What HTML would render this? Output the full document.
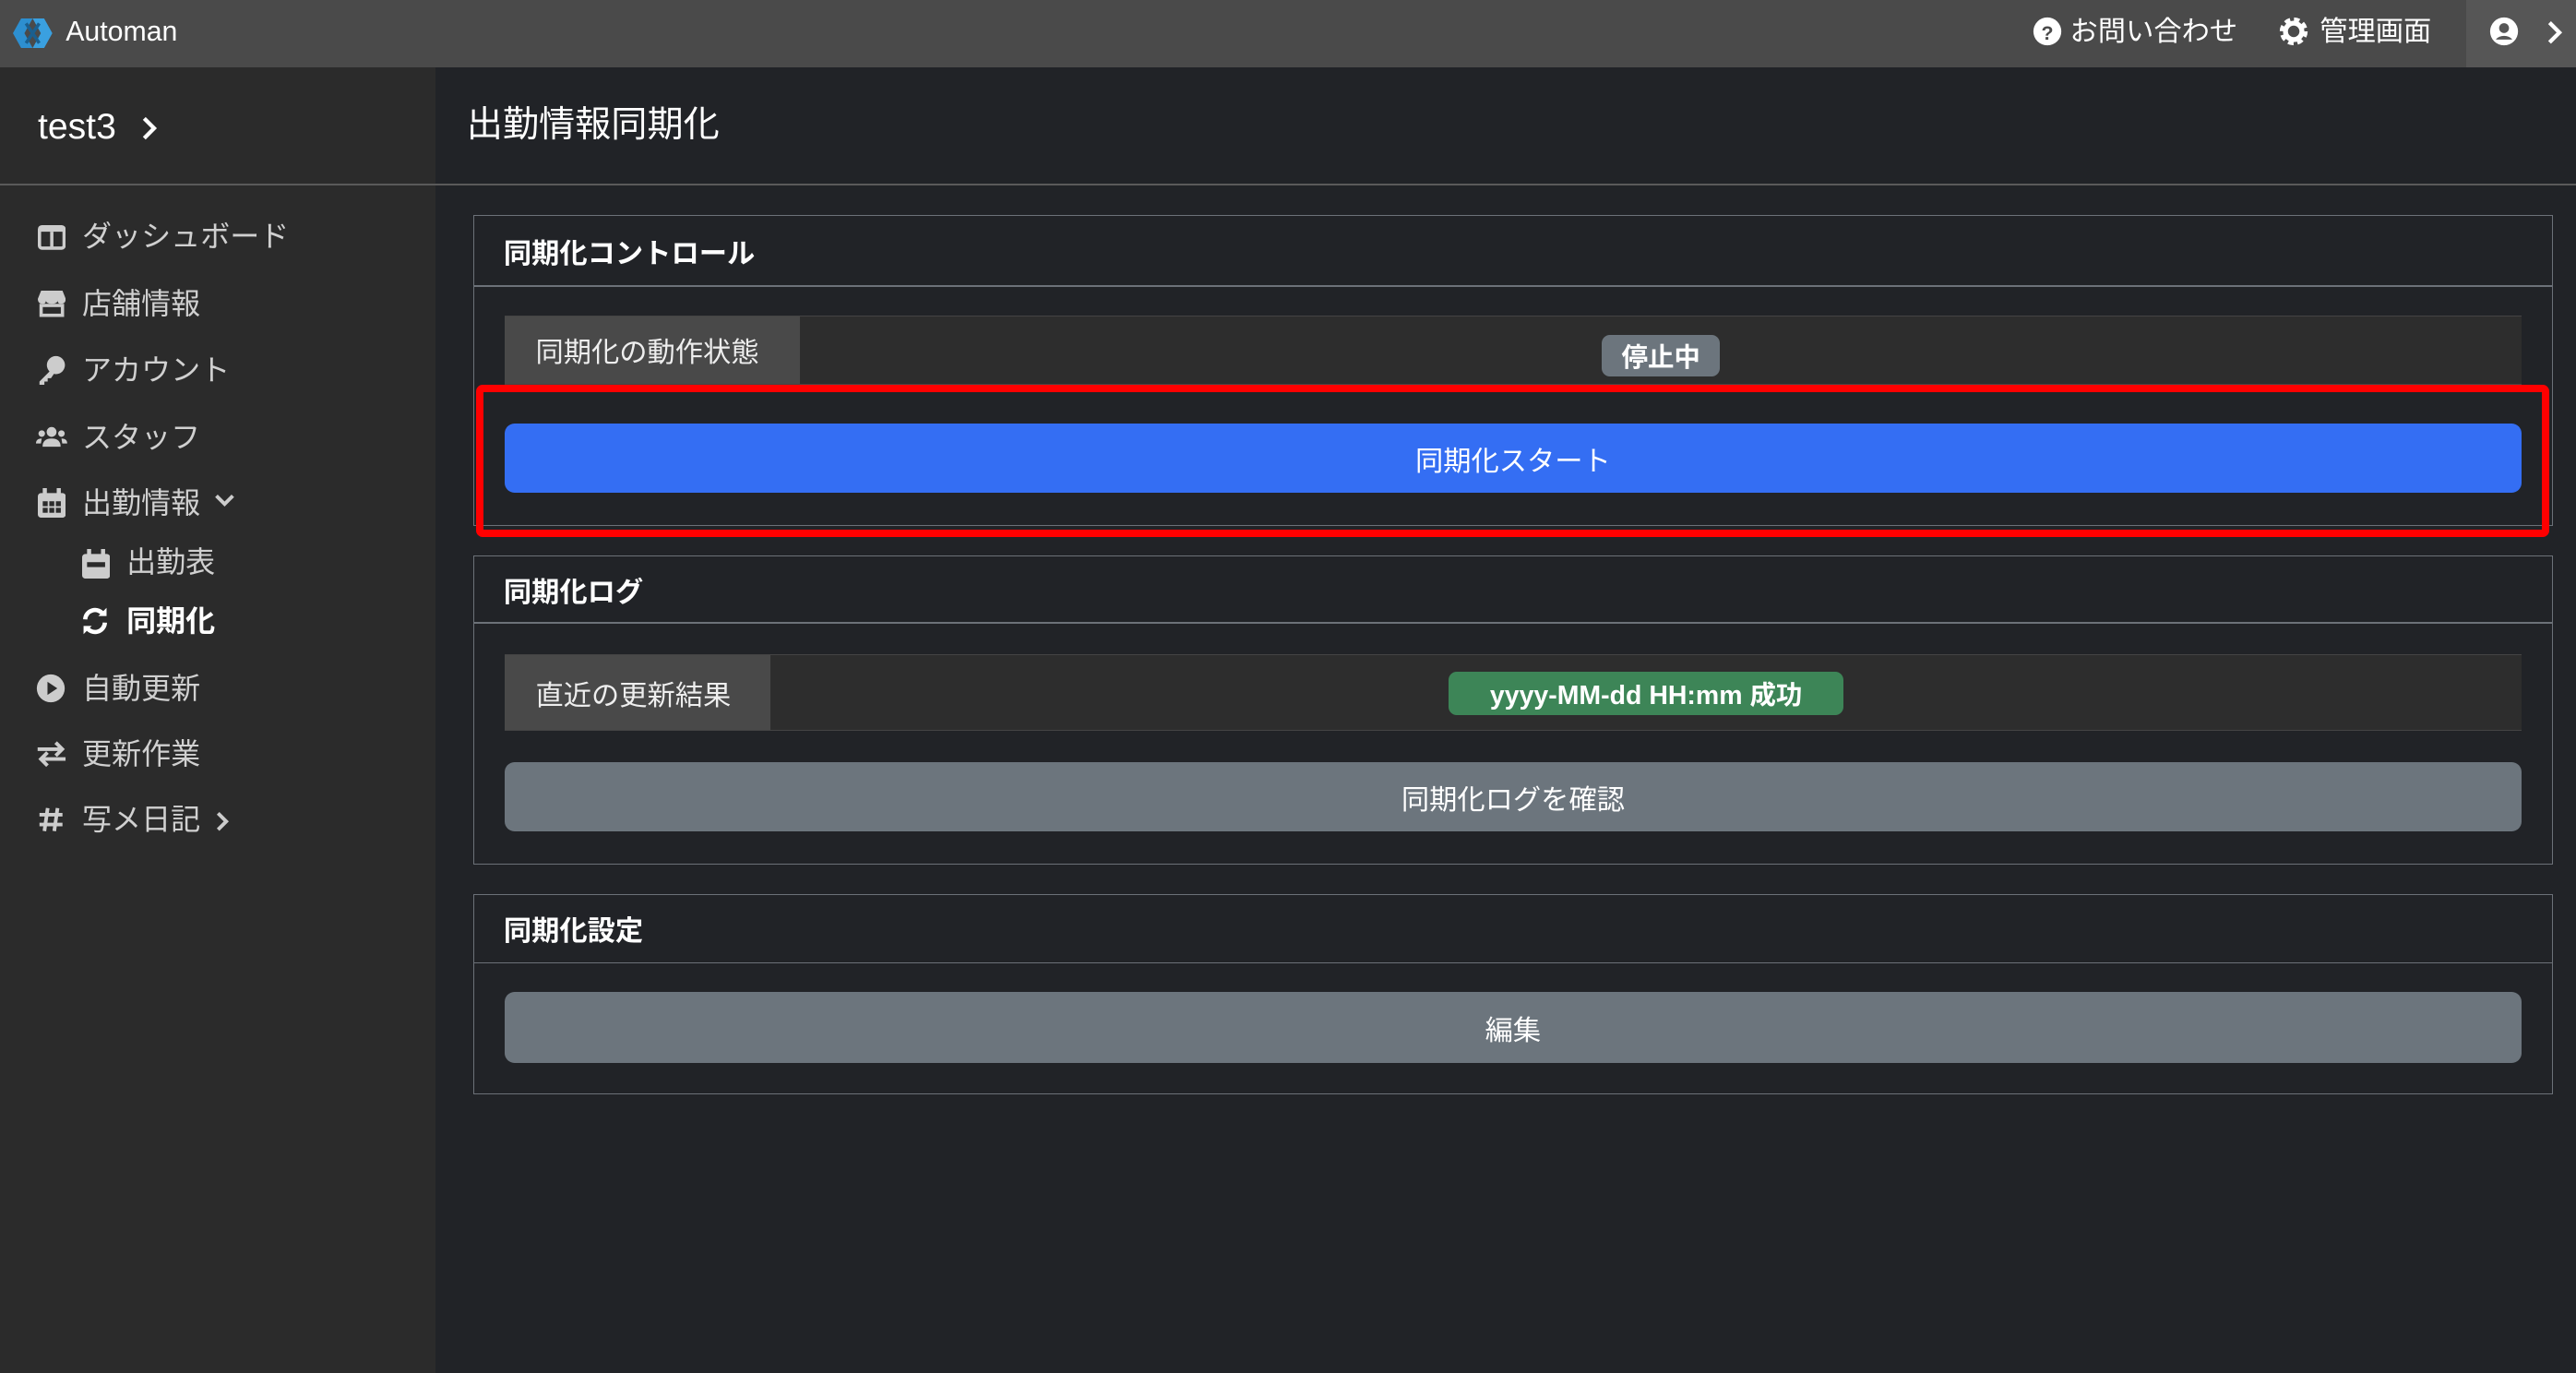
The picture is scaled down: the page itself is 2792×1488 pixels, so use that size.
<!DOCTYPE html>
<html><head><meta charset="utf-8"><style>
*{box-sizing:border-box;margin:0;padding:0}
html,body{width:2792px;height:1488px;overflow:hidden;background:#212327}
#r{zoom:1.7806;position:relative;width:1568px;height:836px;font-family:"Liberation Sans","Noto Sans CJK JP",sans-serif;color:#eee}
.a{position:absolute}
.hdr{left:0;top:0;width:1568px;height:41px;background:#4a4a4a}
.side{left:0;top:41px;width:265px;height:795px;background:#2b2b2b}
.t{white-space:nowrap;line-height:1}
.nav{font-size:18px;color:#d0d0d0}
.card{border:1px solid #6c7178;left:288px;width:1266px}
.ch{position:absolute;left:18px;font-size:17px;font-weight:bold;color:#fff}
.hl{position:absolute;left:0;right:0;height:1px;background:#6c7178}
.row{left:307px;width:1228px;background:#2d2d2d;border-top:1px solid #444;border-bottom:1px solid #444}
.lab{position:absolute;left:0;top:0;bottom:0;background:#494949;color:#eee;font-size:17px;display:flex;align-items:center;padding-left:19px}
.btn{left:307px;width:1228px;height:42px;border-radius:6px;display:flex;align-items:center;justify-content:center;font-size:17px;color:#fff}
.badge{border-radius:5px;font-size:16px;font-weight:bold;color:#fff;display:flex;align-items:center;justify-content:center}
svg{position:absolute}
</style></head><body><div id="r">
<div class="a hdr"></div>
<svg style="left:8px;top:11px" width="24" height="18" viewBox="0 0 24 18"><path d="M0 9L5 0h7l-5 9 5 9H5z" fill="#2d8fd0"/><path d="M24 9l-5-9h-7l5 9-5 9h7z" fill="#3aa0e0"/><path d="M8 3l8 12M16 3L8 15" stroke="#1a5f8f" stroke-width="2"/></svg>
<div class="a t" style="left:40px;top:11px;font-size:17px;color:#fff">Automan</div>
<svg style="left:1237px;top:10px" width="18" height="18" viewBox="0 0 18 18"><circle cx="9" cy="9" r="8.5" fill="#fff"/><text x="9" y="14" font-size="12" font-weight="bold" text-anchor="middle" fill="#4a4a4a" font-family="Liberation Sans">?</text></svg>
<div class="a t" style="left:1260px;top:11px;font-size:17px;color:#fff">お問い合わせ</div>
<svg style="left:1387px;top:10px" width="18" height="18" viewBox="0 0 18 18"><circle cx="9" cy="9" r="6.5" fill="none" stroke="#fff" stroke-width="4" stroke-dasharray="3 2.1"/><circle cx="9" cy="9" r="5" fill="none" stroke="#fff" stroke-width="3"/></svg>
<div class="a t" style="left:1412px;top:11px;font-size:17px;color:#fff">管理画面</div>
<div class="a" style="left:1501px;top:0;width:67px;height:41px;background:#565656"></div>
<svg style="left:1515px;top:10px" width="18" height="18" viewBox="0 0 18 18"><circle cx="9" cy="9" r="8.5" fill="#fff"/><circle cx="9" cy="7" r="3" fill="#565656"/><path d="M4 14c2-3 8-3 10 0" fill="#565656"/></svg>
<svg style="left:1549px;top:12px" width="12" height="16" viewBox="0 0 12 16"><path d="M3 2l6 6-6 6" stroke="#fff" stroke-width="2.4" fill="none"/></svg>

<div class="a side"></div>
<div class="a t" style="left:23px;top:66px;font-size:22px;color:#fff">test3</div>
<svg style="left:85px;top:69px" width="12" height="18" viewBox="0 0 12 18"><path d="M3 3l6 6-6 6" stroke="#fff" stroke-width="2.4" fill="none"/></svg>
<div class="a t" style="left:284px;top:65px;font-size:22px;color:#fff">出勤情報同期化</div>
<div class="a" style="left:0;top:112px;width:1568px;height:1px;background:#5a5a5a"></div>

<svg style="left:23px;top:137px" width="17" height="15" viewBox="0 0 17 15"><rect x="1" y="1" width="15" height="13" rx="1.5" fill="none" stroke="#ccc" stroke-width="2"/><rect x="1" y="1" width="15" height="3" fill="#ccc"/><path d="M8.5 4v10" stroke="#ccc" stroke-width="2"/></svg>
<div class="a t nav" style="left:50px;top:135px">ダッシュボード</div>
<svg style="left:23px;top:177px" width="17" height="16" viewBox="0 0 17 16"><path d="M2 0h13l2 5q0 3-3 3-2 0-2-2 0 2-3.5 2T5 6q0 2-2 2-3 0-3-3z" fill="#ccc"/><rect x="2" y="9" width="13" height="6" fill="none" stroke="#ccc" stroke-width="2"/></svg>
<div class="a t nav" style="left:50px;top:176px">店舗情報</div>
<svg style="left:23px;top:216px" width="17" height="18" viewBox="0 0 17 18"><circle cx="11" cy="6" r="5.5" fill="#ccc"/><path d="M8 9L1 16v2h3v-2h2v-2h2l2-3z" fill="#ccc"/></svg>
<div class="a t nav" style="left:50px;top:216px">アカウント</div>
<svg style="left:22px;top:259px" width="19" height="14" viewBox="0 0 19 14"><circle cx="9.5" cy="4" r="3" fill="#ccc"/><circle cx="3.5" cy="5" r="2" fill="#ccc"/><circle cx="15.5" cy="5" r="2" fill="#ccc"/><path d="M4 13q0-5 5.5-5T15 13zM0 11q0-3 3.5-3L3 11zM19 11q0-3-3.5-3l.5 3z" fill="#ccc"/></svg>
<div class="a t nav" style="left:50px;top:257px">スタッフ</div>
<svg style="left:23px;top:297px" width="17" height="18" viewBox="0 0 17 18"><rect x="0" y="3" width="17" height="15" rx="2" fill="#ccc"/><rect x="3" y="0" width="2.5" height="4" fill="#ccc"/><rect x="11.5" y="0" width="2.5" height="4" fill="#ccc"/><g fill="#2b2b2b"><rect x="3" y="8" width="3" height="3"/><rect x="7" y="8" width="3" height="3"/><rect x="11" y="8" width="3" height="3"/><rect x="3" y="12" width="3" height="3"/><rect x="7" y="12" width="3" height="3"/><rect x="11" y="12" width="3" height="3"/></g></svg>
<div class="a t nav" style="left:50px;top:297px">出勤情報</div>
<svg style="left:130px;top:299px" width="14" height="12" viewBox="0 0 14 12"><path d="M2 3l5 5 5-5" stroke="#ccc" stroke-width="2.2" fill="none"/></svg>
<svg style="left:50px;top:334px" width="17" height="18" viewBox="0 0 17 18"><rect x="0" y="3" width="17" height="15" rx="2" fill="#ccc"/><rect x="3" y="0" width="2.5" height="4" fill="#ccc"/><rect x="11.5" y="0" width="2.5" height="4" fill="#ccc"/><rect x="3" y="8" width="11" height="3" fill="#2b2b2b"/></svg>
<div class="a t nav" style="left:77px;top:333px">出勤表</div>
<svg style="left:49px;top:369px" width="18" height="18" viewBox="0 0 18 18"><path d="M3 8a6 6 0 0 1 11-3M15 10a6 6 0 0 1-11 3" stroke="#fff" stroke-width="2.6" fill="none"/><path d="M11 6h5V1zM7 12H2v5z" fill="#fff"/></svg>
<div class="a t" style="left:77px;top:369px;font-size:18px;color:#fff;font-weight:bold">同期化</div>
<svg style="left:22px;top:410px" width="18" height="18" viewBox="0 0 18 18"><circle cx="9" cy="9" r="8.5" fill="#ccc"/><path d="M7 5l6 4-6 4z" fill="#2b2b2b"/></svg>
<div class="a t nav" style="left:50px;top:410px">自動更新</div>
<svg style="left:22px;top:451px" width="19" height="16" viewBox="0 0 19 16"><path d="M1 5h15M12 1l4 4-4 4M18 11H3M7 7l-4 4 4 4" stroke="#ccc" stroke-width="2.2" fill="none"/></svg>
<div class="a t nav" style="left:50px;top:450px">更新作業</div>
<svg style="left:23px;top:491px" width="16" height="16" viewBox="0 0 16 16"><path d="M6 1L4 15M12 1l-2 14M1 5h14M1 11h14" stroke="#ccc" stroke-width="2.2" fill="none"/></svg>
<div class="a t nav" style="left:50px;top:490px">写メ日記</div>
<svg style="left:130px;top:492px" width="12" height="16" viewBox="0 0 12 16"><path d="M3 3l5 5-5 5" stroke="#ccc" stroke-width="2.2" fill="none"/></svg>

<div class="a card" style="top:131px;height:189px"><div class="ch t" style="top:15px">同期化コントロール</div><div class="hl" style="top:42px"></div></div>
<div class="a row" style="top:192px;height:42px"><div class="lab" style="width:180px">同期化の動作状態</div></div>
<div class="a badge" style="left:975px;top:204px;width:72px;height:25px;background:#6c757d">停止中</div>
<div class="a" style="left:290px;top:234px;width:1262px;height:93px;border:5px solid #ff0000;border-radius:4px"></div>
<div class="a btn" style="top:258px;background:#346ef3">同期化スタート</div>

<div class="a card" style="top:338px;height:188px"><div class="ch t" style="top:14px">同期化ログ</div><div class="hl" style="top:40px"></div></div>
<div class="a row" style="top:398px;height:47px"><div class="lab" style="width:162px">直近の更新結果</div></div>
<div class="a badge" style="left:882px;top:409px;width:240px;height:26px;background:#3d8557">yyyy-MM-dd HH:mm 成功</div>
<div class="a btn" style="top:464px;background:#6c757d">同期化ログを確認</div>

<div class="a card" style="top:544px;height:122px"><div class="ch t" style="top:14px">同期化設定</div><div class="hl" style="top:41px"></div></div>
<div class="a btn" style="top:604px;height:43px;background:#6c757d">編集</div>
</div></body></html>
